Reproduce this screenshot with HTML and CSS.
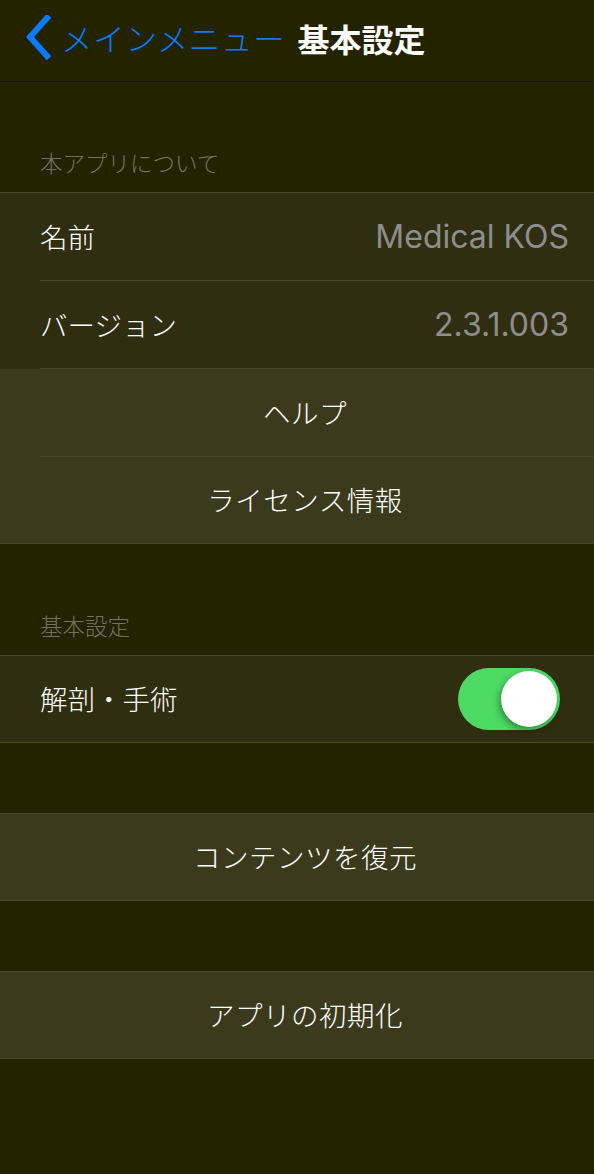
FILE: index.html
```html
<!DOCTYPE html>
<html lang="ja">
<head>
<meta charset="utf-8">
<link rel="stylesheet" href="styles.css">
</head>
<body>
<div class="screen">
  <header class="navbar">
    <div class="back">
      <svg class="chev" width="30" height="46" viewBox="0 0 30 46"><path d="M25 3 L8 22 L25 41" fill="none" stroke="#0a7aff" stroke-width="6" stroke-linecap="square" stroke-linejoin="miter"/></svg>
      <span class="back-label">メインメニュー</span>
    </div>
    <h1 class="title">基本設定</h1>
  </header>

  <div class="section-head">本アプリについて</div>
  <div class="group">
    <div class="row info"><span class="label">名前</span><span class="value">Medical KOS</span></div>
    <div class="row info"><span class="label">バージョン</span><span class="value">2.3.1.003</span></div>
    <div class="row button">ヘルプ</div>
    <div class="row button last">ライセンス情報</div>
  </div>

  <div class="section-head second">基本設定</div>
  <div class="group">
    <div class="row info last"><span class="label">解剖・手術</span>
      <span class="toggle"><span class="knob"></span></span>
    </div>
  </div>

  <div class="spacer"></div>
  <div class="group">
    <div class="row button last">コンテンツを復元</div>
  </div>

  <div class="spacer"></div>
  <div class="group">
    <div class="row button last">アプリの初期化</div>
  </div>
</div>
</body>
</html>
```

FILE: styles.css
```css
* { box-sizing: border-box; margin: 0; padding: 0; }
html, body { background: #232300; }
body {
  width: 594px;
  height: 1174px;
  overflow: hidden;
  font-family: "Noto Sans CJK JP", "Noto Sans", sans-serif;
  color: #ffffff;
}
.screen { display: flex; flex-direction: column; }
.navbar {
  height: 82px;
  display: flex;
  align-items: center;
  border-bottom: 1px solid #181800;
  padding-left: 22px;
}
.back { display: flex; align-items: center; color: #0a7aff; }
.chev { display: block; margin-top: -6px; }
.back-label { font-size: 31.5px; font-weight: 300; margin-left: 9px; letter-spacing: 0.7px; line-height: 1; margin-top: -6px; }
.title { font-size: 32px; font-weight: bold; margin-left: 12px; line-height: 1; margin-top: -6px; }

.section-head {
  height: 110px;
  display: flex;
  align-items: flex-end;
  padding: 0 0 19px 40px;
  font-size: 22.5px;
  font-weight: 300;
  color: #737262;
  line-height: 1;
}
.section-head.second { height: 111px; }

.group {
  border-top: 1px solid #4a492c;
  border-bottom: 1px solid #4a492c;
}
.row {
  height: 88px;
  position: relative;
  display: flex;
  align-items: center;
  font-size: 27.5px;
  font-weight: 300;
  line-height: 1;
}
.row::after {
  content: "";
  position: absolute;
  left: 40px; right: 0; bottom: 0;
  height: 1px;
  background: #4a492c;
}
.row.last::after { display: none; }
.row.last { height: 86px; }
.info {
  background: #302e10;
  justify-content: space-between;
  padding: 0 25px 0 40px;
}
.button {
  background: #3b3a1d;
  justify-content: center;
  padding-left: 16px;
  letter-spacing: 0.5px;
}
.value {
  font-family: "Inter", "Liberation Sans", sans-serif;
  font-size: 32px;
  font-weight: 400;
  color: #8e8e8e;
}
.spacer { height: 70px; }

.toggle {
  width: 102px;
  height: 62px;
  border-radius: 31px;
  background: #4cd964;
  position: relative;
  margin-right: 9px;
}
.knob {
  position: absolute;
  top: 3px;
  right: 3px;
  width: 56px;
  height: 56px;
  border-radius: 50%;
  background: #ffffff;
  box-shadow: -2px 3px 6px rgba(0,0,0,0.35);
}
```
